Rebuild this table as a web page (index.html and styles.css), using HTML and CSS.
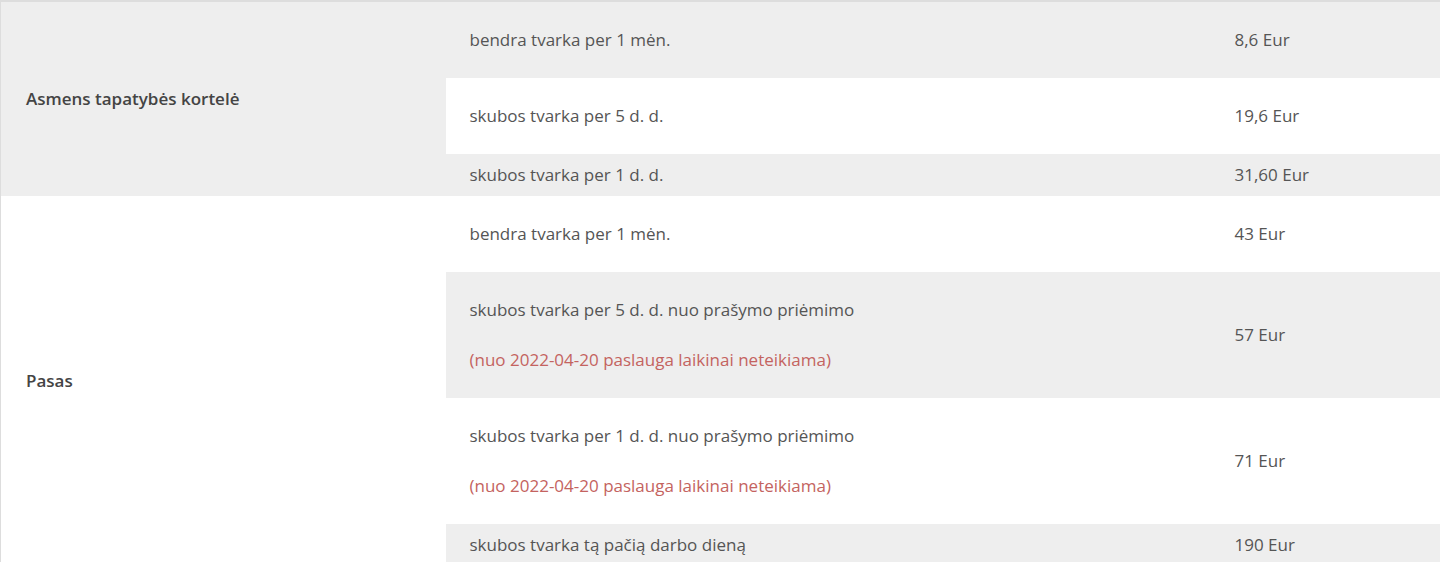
FILE: index.html
```html
<!DOCTYPE html>
<html>
    <head>
        <title>Kainos</title>
        <link rel="stylesheet" href="styles.css">
    </head>
    <body>
        <table class="price-table">
            <colgroup>
                <col class="col-doc">
                <col class="col-term">
                <col class="col-price">
            </colgroup>
            <tbody>
                <tr>
                    <td rowspan="3" class="doc">Asmens tapatybės kortelė</td>
                    <td class="tall"><p>bendra tvarka per 1 mėn.</p></td>
                    <td class="tall price">8,6 Eur</td>
                </tr>
                <tr>
                    <td class="tall"><p>skubos tvarka per 5 d. d.</p></td>
                    <td class="tall price">19,6 Eur</td>
                </tr>
                <tr>
                    <td class="short">skubos tvarka per 1 d. d.</td>
                    <td class="short price">31,60 Eur</td>
                </tr>
                <tr>
                    <td rowspan="4" class="doc">Pasas</td>
                    <td class="tall"><p>bendra tvarka per 1 mėn.</p></td>
                    <td class="tall price">43 Eur</td>
                </tr>
                <tr>
                    <td class="tall">
                        <p>skubos tvarka per 5 d. d. nuo prašymo priėmimo</p>
                        <p class="note">(nuo 2022-04-20 paslauga laikinai neteikiama)</p>
                    </td>
                    <td class="tall price">57 Eur</td>
                </tr>
                <tr>
                    <td class="tall">
                        <p>skubos tvarka per 1 d. d. nuo prašymo priėmimo</p>
                        <p class="note">(nuo 2022-04-20 paslauga laikinai neteikiama)</p>
                    </td>
                    <td class="tall price">71 Eur</td>
                </tr>
                <tr>
                    <td class="short">skubos tvarka tą pačią darbo dieną</td>
                    <td class="short price">190 Eur</td>
                </tr>
            </tbody>
        </table>
    </body>
</html>
```

FILE: styles.css
```css
body {
    margin: 0;
    font-family: "Open Sans", "Liberation Sans", sans-serif;
    font-size: 17px;
    color: #555;
    background: #fff;
}

.price-table {
    width: 1440px;
    border-collapse: collapse;
    table-layout: fixed;
    border-top: 2px solid #ddd;
    border-left: 1px solid #ddd;
}

.col-doc {
    width: 445px;
}
.col-term {
    width: 765px;
}
.col-price {
    width: 230px;
}

.price-table tr:nth-child(odd) td {
    background: #eee;
}

.price-table td {
    line-height: 22px;
    padding: 10px 24px;
    vertical-align: middle;
}

.price-table td.tall {
    padding-top: 27px;
    padding-bottom: 27px;
}

.price-table td.doc {
    padding-left: 25px;
    font-weight: 600;
    color: #444;
}

.price-table p {
    margin: 0 0 28px 0;
}
.price-table p:last-child {
    margin-bottom: 0;
}

.note {
    color: #c46360;
}
```
